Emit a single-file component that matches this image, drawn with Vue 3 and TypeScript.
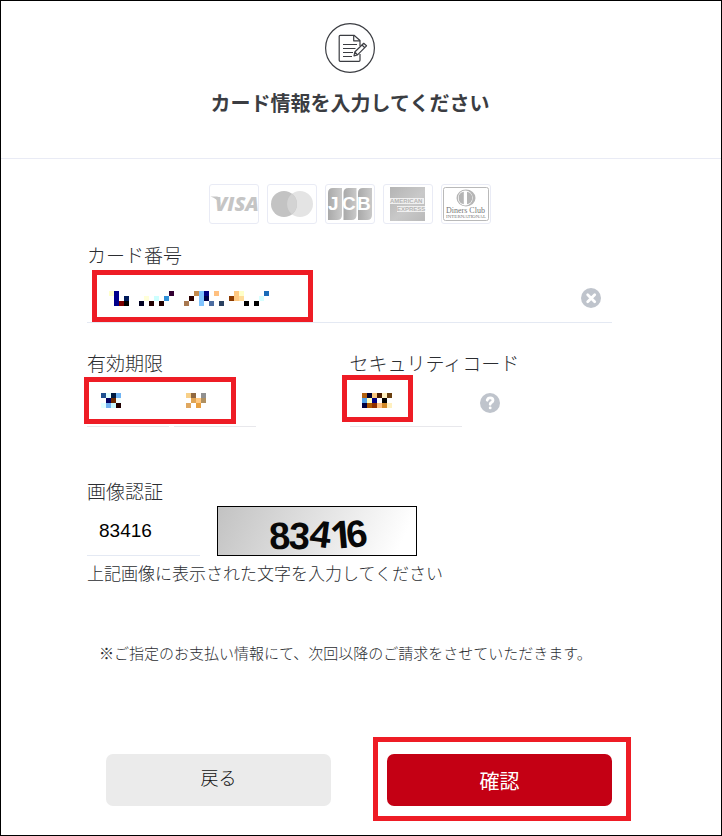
<script setup lang="ts">
import { ref } from 'vue'

interface Cell {
  x: number
  y: number
  color: string
}

// Each row is a list of "column:color" pairs on a 5px grid.
const parseCells = (rows: string[]): Cell[] =>
  rows.flatMap((row, y) =>
    row.split(' ').map((item) => {
      const [column, color] = item.split(':')
      return { x: Number(column) * 5, y: y * 5, color: '#' + color }
    }),
  )

const numberMask = parseCells([
  '0:ffffcc 1:00008b 12:330033 17:c48a4c 18:80c4ff 19:000080 21:ffc080 25:ffc880 26:ffffc8 31:1a6ab8',
  '1:00008b 3:001a5a 7:ffffd8 9:ccffff 11:3090d8 16:2a0000 18:80c4ff 19:000044 24:8b3a00 25:ffc880 26:ffdc98 30:d8ffff',
  '1:00008b 2:7a0000 3:000000 6:000020 8:200000 10:200000 15:a87850 18:80c4ff 20:4c6ca0 22:2a4060 27:000000 29:000000',
])
const monthMask = parseCells([
  '0:205090 1:e0ffff 2:001a40 3:70b4f4',
  '1:000060 2:6a2800 3:f0ffff',
  '0:e0ffff 1:70b0f0 2:c8f8ff 3:200000',
])
const yearMask = parseCells([
  '0:f8d088 1:906840 3:909090',
  '1:e0a454 2:ffc880 3:b09060',
  '0:e0a860 2:e8a040',
])
const codeMask = parseCells([
  '0:b06010 1:000030 2:f8c880 3:4a1c00 4:fff0c0 5:6a4010',
  '0:50a0e8 1:ffffc0 2:000080 4:000000',
  '0:000040 1:b05800 2:903000 3:ffc080 4:d08828 5:fff0c0',
])

const cardNumber = ref('')
const month = ref('')
const year = ref('')
const securityCode = ref('')
const captcha = ref('83416')
</script>

<template>
  <div class="page">
    <header class="header">
      <svg class="header-icon" viewBox="0 0 50 50" aria-hidden="true">
        <circle cx="25" cy="25" r="24.4" />
        <path d="M35 23V17.5L29 12.3H15.2Q14.2 12.3 14.2 13.3V37.3Q14.2 38.3 15.2 38.3H34Q35 38.3 35 37.3V31" />
        <path d="M28.7 12.5V17.8H35M18 21.5H32M18 25.5H30.5M18 29.5H28M18 33.5H27" />
        <path d="M29 32.8L29.8 29L38.7 20.3L41.5 22.8L32.5 31.8Z M37 22L39.8 24.7M29.8 29L32.5 31.8" />
      </svg>
      <h1>カード情報を入力してください</h1>
    </header>

    <form class="form" @submit.prevent>
      <div class="brands">
        <svg class="brand" viewBox="1 1 48 38" role="img" aria-label="VISA">
          <path d="M1.5 12.5H8Q10 12.5 10.4 14.3L11.5 20Q8 14.5 1.5 12.5Z" fill="#c5c5c5" />
          <text class="visa" x="6" y="27">VISA</text>
        </svg>
        <svg class="brand" viewBox="1 1 48 38" role="img" aria-label="Mastercard">
          <circle cx="33" cy="20" r="13" fill="#e4e4e4" />
          <circle cx="17" cy="20" r="13" fill="#c3c3c3" />
          <path d="M25 9.8A13 13 0 0 1 25 30.2A13 13 0 0 1 25 9.8Z" fill="#d3d3d3" />
        </svg>
        <svg class="brand" viewBox="1 1 48 38" role="img" aria-label="JCB">
          <defs>
            <linearGradient id="jcb-shade">
              <stop offset="0" stop-color="#a9a9a9" />
              <stop offset="1" stop-color="#c9c9c9" />
            </linearGradient>
          </defs>
          <path d="M3 9Q3 4 8 4H17V31Q17 36 12 36H3Z" fill="url(#jcb-shade)" />
          <path d="M18.5 9Q18.5 4 23.5 4H31.5V31Q31.5 36 26.5 36H18.5Z" fill="url(#jcb-shade)" />
          <path d="M33 9Q33 4 38 4H47V31Q47 36 42 36H33Z" fill="url(#jcb-shade)" />
          <text class="jcb" x="3" y="26">J</text>
          <text class="jcb" x="17" y="26">C</text>
          <text class="jcb" x="32" y="26">B</text>
        </svg>
        <svg class="brand" viewBox="1 1 48 38" role="img" aria-label="American Express">
          <defs>
            <linearGradient id="amex-shade" x2="1" y2="1">
              <stop offset="0" stop-color="#b4b4b4" />
              <stop offset=".55" stop-color="#c9c9c9" />
              <stop offset="1" stop-color="#bababa" />
            </linearGradient>
          </defs>
          <rect x="7" y="3" width="35" height="34" fill="url(#amex-shade)" />
          <rect x="7" y="14" width="34" height="6" fill="#f0f0f0" />
          <rect x="14" y="22" width="28" height="6" fill="#f0f0f0" />
          <text class="amex" x="7" y="19">AMERICAN</text>
          <text class="amex" x="14" y="27">EXPRESS</text>
        </svg>
        <svg class="brand" viewBox="1 1 48 38" role="img" aria-label="Diners Club International">
          <rect x="2.5" y="3.5" width="45" height="33" rx="2" fill="none" stroke="#b9b9b9" />
          <ellipse cx="25" cy="14" rx="9.5" ry="8.5" fill="#b5b5b5" />
          <circle cx="24.3" cy="14" r="7.4" fill="#fff" />
          <path d="M22.8 7.8A6.3 6.3 0 0 0 22.8 20.2ZM26 7.8A6.3 6.3 0 0 1 26 20.2Z" fill="#b5b5b5" />
          <text class="diners" x="5" y="29">Diners Club</text>
          <text class="diners-sub" x="5" y="34">INTERNATIONAL</text>
        </svg>
      </div>

      <div class="field number-field">
        <label for="card-number">カード番号</label>
        <div class="control number-control">
          <input id="card-number" v-model="cardNumber" type="text" inputmode="numeric" autocomplete="off" />
          <svg class="mask number-mask" width="160" height="15" aria-hidden="true">
            <rect v-for="(c, i) in numberMask" :key="i" :x="c.x" :y="c.y" width="5" height="5" :fill="c.color" />
          </svg>
          <button class="icon-button clear-button" type="button" aria-label="クリア" @click="cardNumber = ''">
            <svg viewBox="0 0 20 20" aria-hidden="true">
              <circle cx="10" cy="10" r="10" />
              <path d="M6.7 6.7L13.7 13.7M13.7 6.7L6.7 13.7" />
            </svg>
          </button>
          <span class="highlight number-highlight"></span>
        </div>
      </div>

      <div class="columns">
        <div class="field">
          <label for="expiry-month">有効期限</label>
          <div class="control expiry-control">
            <select id="expiry-month" v-model="month"><option value=""></option></select>
            <select v-model="year" aria-label="有効期限（年）"><option value=""></option></select>
            <svg class="mask month-mask" width="20" height="15" aria-hidden="true">
              <rect v-for="(c, i) in monthMask" :key="i" :x="c.x" :y="c.y" width="5" height="5" :fill="c.color" />
            </svg>
            <svg class="mask year-mask" width="20" height="15" aria-hidden="true">
              <rect v-for="(c, i) in yearMask" :key="i" :x="c.x" :y="c.y" width="5" height="5" :fill="c.color" />
            </svg>
            <span class="highlight expiry-highlight"></span>
          </div>
        </div>
        <div class="field">
          <label for="security-code">セキュリティコード</label>
          <div class="control code-control">
            <input id="security-code" v-model="securityCode" type="text" inputmode="numeric" autocomplete="off" />
            <button class="icon-button" type="button" aria-label="ヘルプ">
              <svg viewBox="0 0 20 20" aria-hidden="true">
                <circle cx="10" cy="10" r="10" />
                <path d="M7.2 7.2Q7.8 4.8 10.2 4.8Q13 4.8 13 7.2Q13 8.6 11.4 9.5Q10.2 10.2 10.2 11.3M10.2 14.8V14.9" />
              </svg>
            </button>
            <svg class="mask code-mask" width="30" height="15" aria-hidden="true">
              <rect v-for="(c, i) in codeMask" :key="i" :x="c.x" :y="c.y" width="5" height="5" :fill="c.color" />
            </svg>
            <span class="highlight code-highlight"></span>
          </div>
        </div>
      </div>

      <div class="field captcha-field">
        <label for="captcha">画像認証</label>
        <div class="captcha-row">
          <input id="captcha" v-model="captcha" type="text" autocomplete="off" />
          <svg class="captcha-image" viewBox="0 0 200 50" role="img" aria-label="画像認証">
            <defs>
              <linearGradient id="captcha-shade" x2="1" y2=".12">
                <stop offset="0" stop-color="#c2c2c2" />
                <stop offset="1" stop-color="#ffffff" />
              </linearGradient>
            </defs>
            <rect x=".5" y=".5" width="199" height="49" fill="url(#captcha-shade)" stroke="#000" />
            <g class="captcha-digits">
              <text x="52" y="43" transform="rotate(-3 62 30)">8</text>
              <text x="72" y="43" transform="rotate(3 82 30)">3</text>
              <text x="93" y="41" transform="rotate(7 103 28)">4</text>
              <text class="captcha-one" x="113" y="42" transform="rotate(-5 124 28)">1</text>
              <text x="129" y="41" transform="rotate(-8 139 28)">6</text>
            </g>
          </svg>
        </div>
        <p class="hint">上記画像に表示された文字を入力してください</p>
      </div>

      <p class="note">※ご指定のお支払い情報にて、次回以降のご請求をさせていただきます。</p>

      <div class="actions">
        <button class="button back" type="button">戻る</button>
        <div class="confirm-wrap">
          <button class="button confirm" type="submit">確認</button>
          <span class="highlight confirm-highlight"></span>
        </div>
      </div>
    </form>
  </div>
</template>

<style>
body {
  margin: 0;
  background: #fff;
}
</style>

<style scoped>
.page {
  box-sizing: border-box;
  min-height: 100vh;
  border: 1px solid #000;
  background: #fff;
  color: #2b2d31;
  font-family: "Noto Sans CJK JP", sans-serif;
  font-weight: 300;
}

.header {
  display: flex;
  flex-direction: column;
  align-items: center;
  padding: 22px 22px 40px 0;
  border-bottom: 1px solid #e9ebf5;
}

.header-icon {
  width: 50px;
  height: 50px;
  fill: none;
  stroke: #3b3d42;
  stroke-width: 1.2;
  stroke-linejoin: round;
}

h1 {
  margin: 15px 0 0;
  color: #3b3d42;
  font-size: 20px;
  line-height: 30px;
  font-weight: 700;
}

.form {
  padding: 25px 109px 28px 86px;
}

.brands {
  display: flex;
  justify-content: center;
  gap: 8px;
  margin-bottom: 18px;
}

.brand {
  box-sizing: border-box;
  width: 50px;
  height: 40px;
  border: 1px solid #e9ebf5;
  border-radius: 3px;
}

.visa {
  font: italic 800 20px "Open Sans", sans-serif;
  fill: #c5c5c5;
}

.jcb {
  font: 700 19px "Liberation Sans", sans-serif;
  fill: #fff;
}

.amex {
  font: 700 6px "Liberation Sans", sans-serif;
  fill: #b4b4b4;
}

.diners {
  font: 8px "Liberation Serif", serif;
  fill: #777;
}

.diners-sub {
  font: 5px "Liberation Serif", serif;
  fill: #777;
}

label {
  display: block;
  width: fit-content;
  margin-bottom: 2px;
  font-size: 19px;
  line-height: 26px;
}

input,
select {
  box-sizing: border-box;
  min-width: 0;
  margin: 0;
  padding: 0 12px;
  border: 0;
  border-bottom: 1px solid #e4e9f3;
  border-radius: 0;
  outline: 0;
  background: transparent;
  color: #000;
  font: 19px "Liberation Sans", sans-serif;
  appearance: none;
}

.control {
  position: relative;
  display: flex;
}

.number-control input {
  width: 100%;
  height: 53px;
  padding-right: 44px;
}

.icon-button {
  width: 20px;
  height: 20px;
  padding: 0;
  border: 0;
  background: none;
}

.icon-button svg {
  display: block;
  width: 20px;
  height: 20px;
  fill: #bfc4cc;
}

.icon-button path {
  fill: none;
  stroke: #fff;
  stroke-width: 2.8;
  stroke-linecap: round;
}

.clear-button {
  position: absolute;
  top: 18px;
  right: 11px;
}

.mask,
.highlight {
  position: absolute;
  pointer-events: none;
}

.highlight {
  box-sizing: border-box;
  border: 5px solid #ee1c25;
}

.number-mask {
  top: 21px;
  left: 22px;
}

.number-highlight {
  top: 0;
  left: 5px;
  width: 221px;
  height: 52px;
}

.columns {
  display: grid;
  grid-template-columns: 1fr 1fr;
  margin-top: 27px;
}

.expiry-control {
  gap: 5px;
}

.expiry-control select {
  width: 82px;
  height: 49px;
  border-color: #e8e8ec;
}

.month-mask {
  top: 15px;
  left: 14px;
}

.year-mask {
  top: 15px;
  left: 99px;
}

.expiry-highlight {
  top: -1px;
  left: -3px;
  width: 152px;
  height: 47px;
}

.code-control {
  align-items: center;
  gap: 18px;
}

.code-control input {
  width: 112px;
  height: 49px;
  border-color: #e8e8ec;
}

.code-mask {
  top: 15px;
  left: 12px;
}

.code-highlight {
  top: -3px;
  left: -8px;
  width: 71px;
  height: 47px;
}

.captcha-field {
  margin-top: 51px;
}

.captcha-row {
  display: flex;
  align-items: flex-end;
  gap: 17px;
}

.captcha-row input {
  width: 113px;
  height: 50px;
}

.captcha-image {
  width: 200px;
  height: 50px;
}

.captcha-digits {
  font: 700 38px "Liberation Sans", sans-serif;
  fill: #080808;
}

.captcha-one {
  font-family: "Open Sans", sans-serif;
}

.hint,
.note {
  margin: 0;
}

.hint {
  margin-top: 3px;
  font-size: 17px;
  line-height: 28px;
}

.note {
  margin-top: 54px;
  padding-left: 12px;
  font-size: 15px;
  line-height: 24px;
}

.actions {
  display: flex;
  gap: 56px;
  margin-top: 89px;
  padding-left: 19px;
}

.actions > * {
  flex: 1;
}

.confirm-wrap {
  position: relative;
}

.button {
  height: 52px;
  padding: 0;
  border: 0;
  border-radius: 7px;
  font-family: inherit;
}

.back {
  padding-bottom: 6px;
  background: #ebebeb;
  color: #111;
  font-size: 18px;
  font-weight: 300;
}

.confirm {
  width: 100%;
  background: #c40014;
  color: #fff;
  font-size: 20px;
  font-weight: 400;
}

.confirm-highlight {
  top: -17px;
  right: -19px;
  bottom: -15px;
  left: -14px;
}
</style>
